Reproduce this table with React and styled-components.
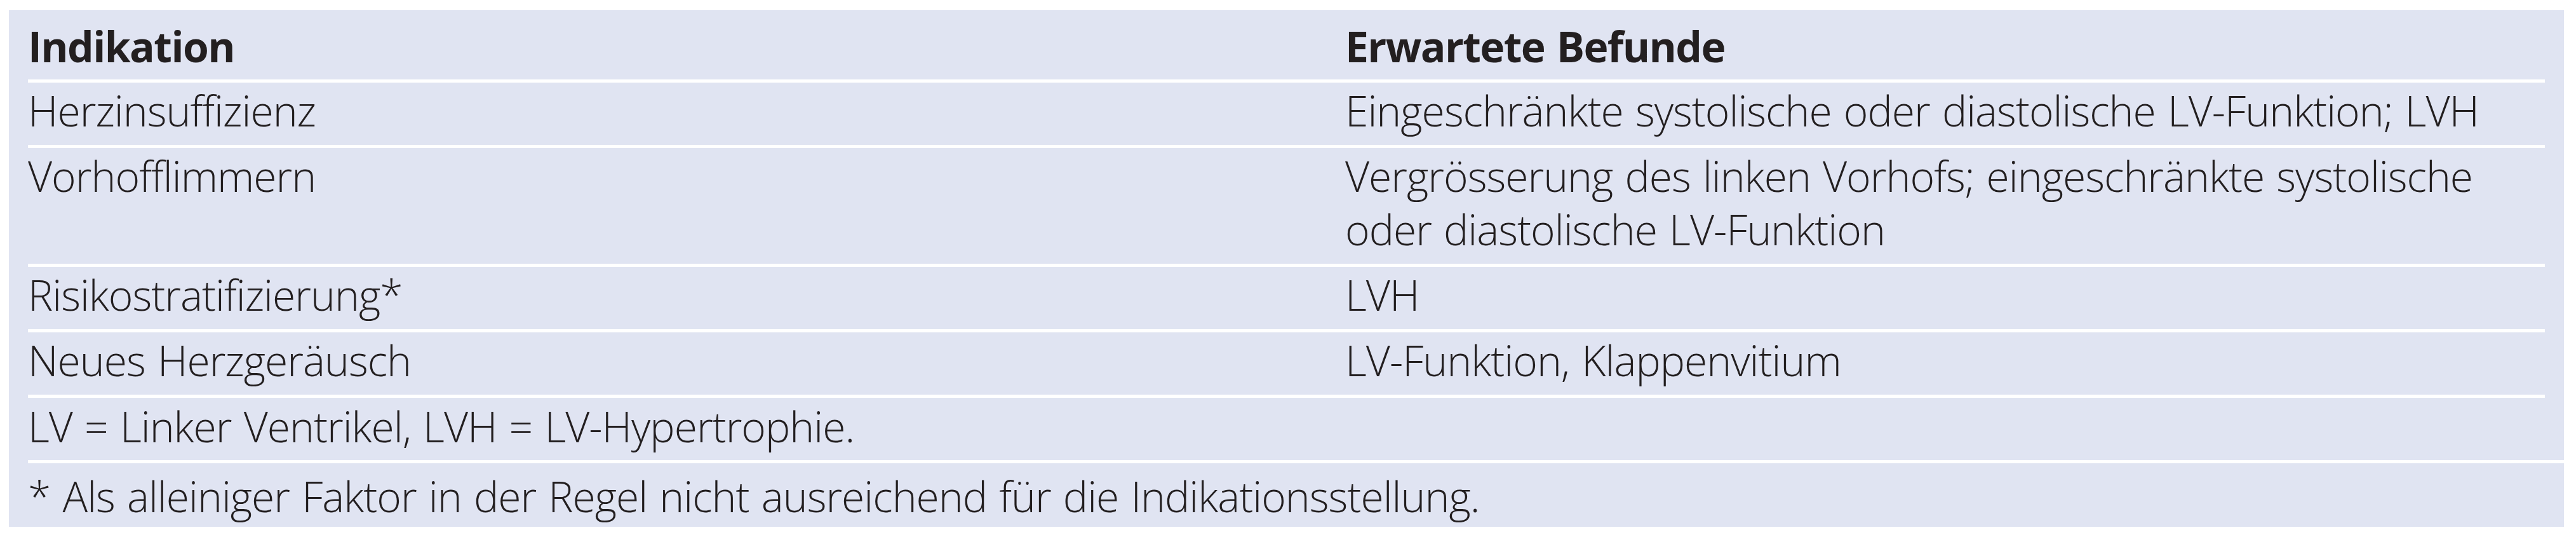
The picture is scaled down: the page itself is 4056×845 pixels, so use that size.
import styled, { createGlobalStyle } from "styled-components";

const GlobalStyle = createGlobalStyle`
  html, body {
    margin: 0;
    padding: 0;
    background: #ffffff;
  }
`;

const Page = styled.div`
  padding: 16px 19px 16px 14px;
`;

const Table = styled.div`
  background: #e0e4f2;
  padding: 0 30px;
  color: #231f20;
  font-family: "Open Sans", "Noto Sans", sans-serif;
  font-size: 66px;
  line-height: 84px;
  letter-spacing: -1px;
  word-spacing: 3px;
`;

const Row = styled.div`
  display: grid;
  grid-template-columns: 2074px 1fr;
  border-top: ${props => (props.$first ? "0" : "5px solid #ffffff")};
  margin-right: ${props => (props.$full ? "-30px" : "0")};
`;

const Cell = styled.div`
  padding: ${props => props.$pad || "1px 0 13px 0"};
  grid-column: ${props => (props.$span ? "1 / -1" : "auto")};
  font-weight: ${props => (props.$head ? 700 : 300)};
  letter-spacing: ${props => (props.$head ? "-1.6px" : "inherit")};
  white-space: nowrap;
`;

const rows = [
  ["Herzinsuffizienz", ["Eingeschränkte systolische oder diastolische LV-Funktion; LVH"]],
  [
    "Vorhofflimmern",
    ["Vergrösserung des linken Vorhofs; eingeschränkte systolische", "oder diastolische LV-Funktion"],
  ],
  ["Risikostratifizierung*", ["LVH"]],
  ["Neues Herzgeräusch", ["LV-Funktion, Klappenvitium"]],
];

const App = () => {
  return (
    <Page>
      <GlobalStyle />
      <Table>
        <Row $first>
          <Cell $head $pad="14px 0 11px 0">Indikation</Cell>
          <Cell $head $pad="14px 0 11px 0">Erwartete Befunde</Cell>
        </Row>
        {rows.map(([label, lines]) => (
          <Row key={label}>
            <Cell>{label}</Cell>
            <Cell>
              {lines.map((line, i) => (
                <div key={i}>{line}</div>
              ))}
            </Cell>
          </Row>
        ))}
        <Row>
          <Cell $span $pad="2px 0 12px 0">LV = Linker Ventrikel, LVH = LV-Hypertrophie.</Cell>
        </Row>
        <Row $full>
          <Cell $span $pad="9px 0 7px 0">
            * Als alleiniger Faktor in der Regel nicht ausreichend für die Indikationsstellung.
          </Cell>
        </Row>
      </Table>
    </Page>
  );
};

export default App;
